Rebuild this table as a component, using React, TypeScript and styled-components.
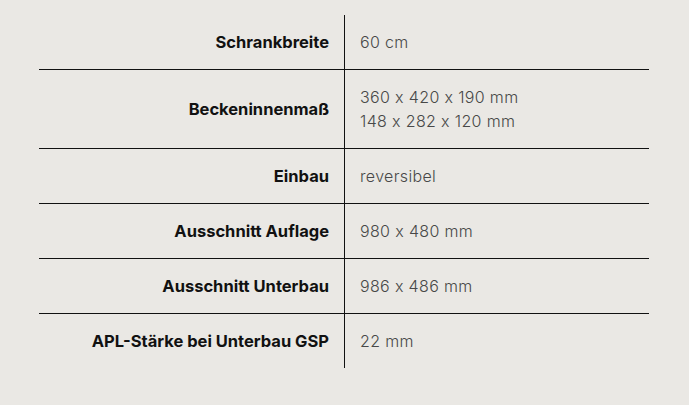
import React from "react";
import styled, { createGlobalStyle } from "styled-components";

const Global = createGlobalStyle`
  html, body { margin: 0; padding: 0; background: #eae8e4; }
  body { width: 689px; height: 405px; overflow: hidden; }
`;

const Page = styled.div`
  padding: 15px 0 0 39px;
`;

const Table = styled.div`
  width: 610px;
  display: grid;
  grid-template-columns: 305px 1fr;
`;

const Label = styled.div<{ $last?: boolean }>`
  display: flex;
  align-items: center;
  justify-content: flex-end;
  padding: 15px 15px 15px 0;
  font-family: Inter, "Liberation Sans", sans-serif;
  font-weight: 700;
  font-size: 16.5px;
  line-height: 24px;
  color: #111;
  border-bottom: ${(p) => (p.$last ? "none" : "1px solid #111")};
`;

const Value = styled.div<{ $last?: boolean }>`
  padding: 15px 0 15px 15px;
  border-left: 1px solid #111;
  font-family: Inter, "Liberation Sans", sans-serif;
  font-feature-settings: "calt" 0;
  font-weight: 300;
  font-size: 16px;
  letter-spacing: 0.35px;
  line-height: 24px;
  color: #484848;
  border-bottom: ${(p) => (p.$last ? "none" : "1px solid #111")};
`;

const rows: [string, string[]][] = [
  ["Schrankbreite", ["60 cm"]],
  ["Beckeninnenmaß", ["360 x 420 x 190 mm", "148 x 282 x 120 mm"]],
  ["Einbau", ["reversibel"]],
  ["Ausschnitt Auflage", ["980 x 480 mm"]],
  ["Ausschnitt Unterbau", ["986 x 486 mm"]],
  ["APL-Stärke bei Unterbau GSP", ["22 mm"]],
];

export default function App() {
  return (
    <Page>
      <Global />
      <Table>
        {rows.map(([l, v], i) => {
          const last = i === rows.length - 1;
          return (
            <React.Fragment key={l}>
              <Label $last={last}>{l}</Label>
              <Value $last={last}>
                {v.map((t) => (
                  <div key={t}>{t}</div>
                ))}
              </Value>
            </React.Fragment>
          );
        })}
      </Table>
    </Page>
  );
}
